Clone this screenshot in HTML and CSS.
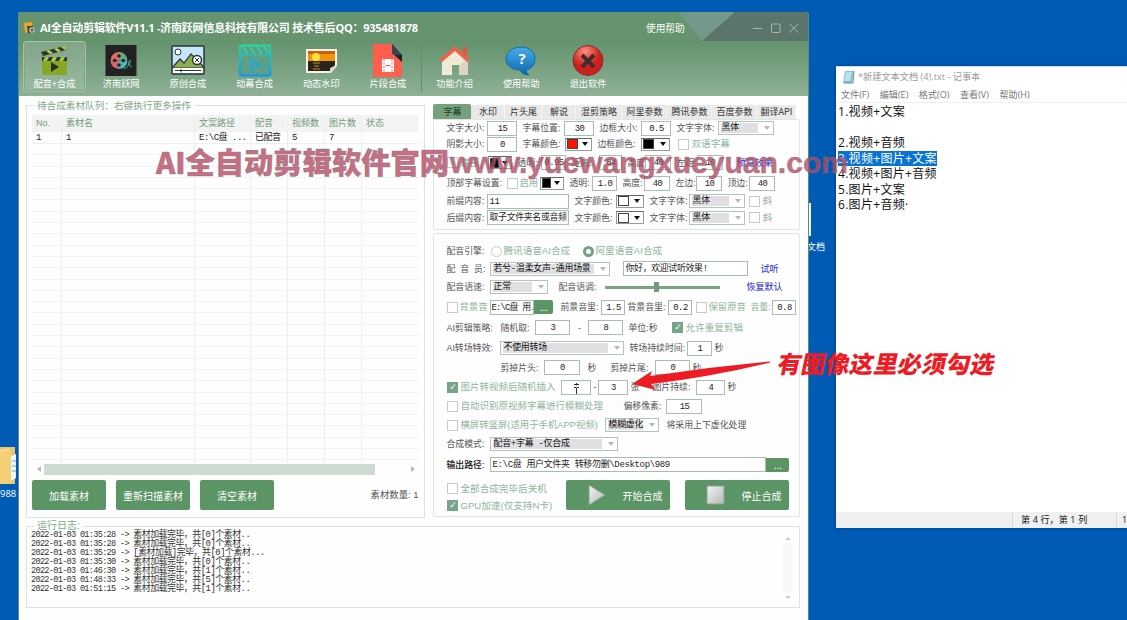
FILE: index.html
```html
<!DOCTYPE html>
<html lang="zh-CN">
<head>
<meta charset="utf-8">
<title>AI全自动剪辑软件</title>
<link rel="stylesheet" href="styles.css">
</head>
<body>
<div class="desktop">
  <div class="folder"><svg width="18" height="38" viewBox="0 0 18 38"><path d="M0 1H15V38H0Z" fill="#e9c568"/><path d="M0 4L9 2V37H0Z" fill="#f8dc90"/><path d="M11 10L16 8V32L11 35Z" fill="#eef5fa"/><path d="M12 15h4M12 20h4M12 25h4" stroke="#6aa9d8"/><path d="M0 6L11 4V38H0Z" fill="#f3cf75"/></svg><span>988</span></div>
  <div class="docfile"><i></i><span>文档</span></div>

  <main class="app">
    <header class="app-head">
      <svg class="corner" width="130" height="29" viewBox="0 0 130 29"><path d="M0 0H56L23 29Z" fill="#74998b"/><path d="M56 0H130V29H23Z" fill="#5b756d"/></svg>
      <div class="titlebar">
        <svg width="12" height="12" viewBox="0 0 12 12"><path d="M0 1L8 0V4H4V10L1 11Z" fill="#eba52d"/><path d="M3 4H9V11H4Z" fill="#493e28"/><circle cx="8" cy="8" r="3" fill="#a4aaa4"/><circle cx="8" cy="8" r="1" fill="#384238"/></svg>
        <h1>AI全自动剪辑软件V11.1 -济南跃网信息科技有限公司 技术售后QQ：935481878</h1>
        <span class="help">使用帮助</span>
        <svg class="winctl" width="48" height="12" viewBox="0 0 48 12" fill="none" stroke="#a7b6ae"><path d="M1 6.500H10M37.500 2L46 10.500M46 2L37.500 10.500"/><rect x="19.500" y="2" width="8.500" height="8.500" rx="1"/></svg>
      </div>
      <nav class="toolbar">
        <div class="tool on"><svg viewBox="0 0 34 34"><path d="M4 13H29V29Q29 31 27 31H6Q4 31 4 29Z" fill="#87a827"/><path d="M4 13H29V17H4Z" fill="#30382b"/><path d="M7 13l-2 4h4l2-4zm8 0-2 4h4l2-4zm8 0-2 4h4l2-4z" fill="#a6c94b"/><path d="M3 8L27 2L28 6L5 12Z" fill="#30382b"/><path d="M8 7l4 3 3-1-4-3zm8-2 4 3 3-1-4-3zm7-2 4 3 1-1-1-3z" fill="#b6d64c"/><path d="M13 18L21 23L13 28Z" fill="#26331d"/></svg><span>配音+合成</span></div>
        <div class="tool"><svg viewBox="0 0 34 34"><rect x="1.500" y="1" width="31" height="31" fill="#222223"/><path d="M15 8A8.500 8.500 0 0 1 23.500 16.500H15Z" fill="#62ad83"/><path d="M15 8A8.500 8.500 0 0 0 6.500 16.500H15Z" fill="#e36c62"/><path d="M6.500 16.500A8.500 8.500 0 0 0 15 25V16.500Z" fill="#d9636a"/><path d="M15 25A8.500 8.500 0 0 0 23.500 16.500H15Z" fill="#4fb6bc"/><g fill="#222223"><circle cx="15" cy="12" r="1.800"/><circle cx="10.800" cy="16.500" r="1.800"/><circle cx="19.200" cy="16.500" r="1.800"/><circle cx="15" cy="21" r="1.800"/></g><path d="M19 24Q24 25 24.500 20Q25.500 14 26.500 17Q24 22 28 23" fill="none" stroke="#45a995"/></svg><span>济南跃网</span></div>
        <div class="tool"><svg viewBox="0 0 34 34"><rect x="1" y="2" width="32" height="28" rx="1" fill="#c7e5fb" stroke="#28353b" stroke-width="1.500"/><path d="M2 23L9 15L13 19L20 10L25 15L32 22V24H2Z" fill="#8eae4e" stroke="#28353b" stroke-width="1.200"/><circle cx="7" cy="8" r="3" fill="#fff" stroke="#28353b"/><circle cx="26" cy="16" r="4.500" fill="#fff" stroke="#28353b" stroke-width="1.500"/><path d="M24 14l4 4M24 18l4-4" stroke="#28353b"/><path d="M2 24H32V29H2Z" fill="#fff"/><path d="M4 26.500H30M10 25V28.500" stroke="#28353b"/></svg><span>原创合成</span></div>
        <div class="tool"><svg viewBox="0 0 34 34"><defs><linearGradient id="clapGrad" x2="0" y2="1"><stop stop-color="#2ed09b"/><stop offset="1" stop-color="#159be4"/></linearGradient></defs><rect x="2" y="1.500" width="30" height="30" rx="2" fill="#5f9f86" stroke="url(#clapGrad)" stroke-width="2.500"/><path d="M2 11H32" stroke="#2dbeb4" stroke-width="1.500"/><path d="M5 3l5 7M12 3l5 7M19 3l5 7M26 3l4 6" stroke="#32d4a0" stroke-width="2"/><path d="M13.500 16L22 21L13.500 26Z" fill="#5f9f86" stroke="#22a7dc" stroke-width="2"/></svg><span>动幕合成</span></div>
        <div class="tool"><svg viewBox="0 0 34 34"><path d="M2 5H33V22L27 29H2Z" fill="#f5f2e6"/><path d="M4 7H31V18H4Z" fill="#f0960a"/><path d="M4 7H31V10H4Z" fill="#cf5f08"/><circle cx="12" cy="13" r="4" fill="#ffe03c"/><path d="M4 17H31V21L26 27H4Z" fill="#29231a"/><path d="M9 19h7M10 22h5M9 25h7" stroke="#c29318"/><path d="M33 21L26 29V24Z" fill="#d9d9d2"/></svg><span>动态水印</span></div>
        <div class="tool"><svg viewBox="0 0 34 34"><path d="M2 0H21L31 11V33H2Z" fill="#ff5d4e"/><path d="M21 0L31 11V18L21 9Z" fill="#17242a"/><path d="M21 0L31 11H24Q21 11 21 8Z" fill="#344650"/><rect x="11" y="15" width="12" height="13" fill="#fff"/><path d="M13 15V28M21 15V28" stroke="#ff5d4e" stroke-dasharray="2 1.500"/><path d="M14.500 21.500H19.500" stroke="#ff5d4e"/></svg><span>片段合成</span></div>
        <i class="sep"></i>
        <div class="tool"><svg viewBox="0 0 34 34"><path d="M25 3H29V13H25Z" fill="#e35340"/><path d="M4 15L17 4L30 15V31H21V21H14V31H4Z" fill="#efe9d7"/><path d="M21 21L30 15V31H21Z" fill="#ddd5c2"/><path d="M1 16L17 2L32 16L29 18L17 7L4 18Z" fill="#ee6049"/></svg><span>功能介绍</span></div>
        <div class="tool"><svg viewBox="0 0 34 34"><defs><linearGradient id="askGrad" x2="0" y2="1"><stop stop-color="#47abeb"/><stop offset="1" stop-color="#0d68ae"/></linearGradient></defs><path d="M17 3C26 3 31 8 31 15C31 21 27 25 22 26Q22 29 25 31Q18 31 16 26C7 26 2 21 2 15S8 3 17 3Z" fill="url(#askGrad)" stroke="#176da5"/><text x="18" y="20" text-anchor="middle" class="ask">?</text></svg><span>使用帮助</span></div>
        <div class="tool"><svg viewBox="0 0 34 34"><defs><radialGradient id="stopGrad" cx=".4" cy=".2"><stop stop-color="#ff8d80"/><stop offset="1" stop-color="#cc201e"/></radialGradient></defs><circle cx="17" cy="16.500" r="15" fill="url(#stopGrad)" stroke="#8f2925"/><path d="M11 11L23 23M23 11L11 23" stroke="#462b2b" stroke-width="4"/></svg><span>退出软件</span></div>
      </nav>
    </header>

    <div class="work">
      <section class="queue">
        <h2>待合成素材队列：右键执行更多操作</h2>
        <div class="table">
          <div class="tr th"><span>No.</span><span>素材名</span><span>文案路径</span><span>配音</span><span>视频数</span><span>图片数</span><span>状态</span></div>
          <div class="tr td"><span>1</span><span>1</span><span>E:\C盘 ...</span><span>已配音</span><span>5</span><span>7</span><span></span></div>
          <div class="tr fill"><span></span><span></span><span></span><span></span><span></span><span></span><span></span></div>
        </div>
        <div class="hscroll"><i class="al"></i><b></b><i class="ar"></i></div>
        <div class="actions"><button>加载素材</button><button>重新扫描素材</button><button>清空素材</button><span>素材数量: 1</span></div>
      </section>

      <section class="settings">
        <div class="tabs"><b>字幕</b><span>水印</span><span>片头尾</span><span>解说</span><span>混剪策略</span><span>阿里参数</span><span>腾讯参数</span><span>百度参数</span><span>翻译API</span></div>
        <div class="panel subtitle">
          <div class="row a1"><label>文字大小:</label><em>15</em><label>字幕位置:</label><em>30</em><label>边框大小:</label><em>0.5</em><label>文字字体:</label><div class="sel">黑体</div></div>
          <div class="row a2"><label>阴影大小:</label><em>0</em><label>字幕颜色:</label><div class="col red"></div><label>边框颜色:</label><div class="col black"></div><div class="cb pad">双语字幕</div></div>
          <div class="row a3"><div class="cb">底部</div><div class="col black"></div><label>透明:</label><em>0.95</em><label>距离:</label><em>84</em><label>高度:</label><em>40</em><label>左距:</label><em>10</em><a>预览效果</a></div>
          <div class="row a4"><label>顶部字幕设置:</label><div class="cb">启用</div><div class="col black"></div><label>透明:</label><em>1.0</em><label>高度:</label><em>40</em><label>左边:</label><em>10</em><label>顶边:</label><em>40</em></div>
          <div class="row a5"><label>前缀内容:</label><em class="l">11</em><label>文字颜色:</label><div class="col white"></div><label>文字字体:</label><div class="sel">黑体</div><div class="cb pads">斜</div></div>
          <div class="row a5"><label>后缀内容:</label><em class="l">取子文件夹名或音频</em><label>文字颜色:</label><div class="col white"></div><label>文字字体:</label><div class="sel">黑体</div><div class="cb pads">斜</div></div>
        </div>
        <div class="panel voice">
          <div class="row b1"><label>配音引擎:</label><div class="rd">腾讯语音AI合成</div><div class="rd on">阿里语音AI合成</div></div>
          <div class="row b2"><label>配&nbsp; 音&nbsp; 员:</label><div class="sel">若兮-温柔女声-通用场景</div><i></i><em class="l">你好，欢迎试听效果!</em><a>试听</a></div>
          <div class="row b3"><label>配音语速:</label><div class="sel">正常</div><label class="p10">配音语调:</label><div class="slider"><i></i></div><a>恢复默认</a></div>
          <div class="row b4"><div class="cb">背景音</div><em class="l">E:\C盘 用.</em><button class="dots">...</button><label class="p6">前景音里:</label><em>1.5</em><label class="p2">背景音里:</label><em>0.2</em><div class="cb pads">保留原音</div><label class="dim">音量:</label><em>0.8</em></div>
          <div class="row b5"><label>AI剪辑策略:</label><label>随机取:</label><em>3</em><label class="c">-</label><em>8</em><label>单位:秒</label><div class="cb pad ck">允许重复剪辑</div></div>
          <div class="row b6"><label>AI转场特效:</label><div class="sel">不使用转场</div><label>转场持续时间:</label><em>1</em><label class="p2">秒</label></div>
          <div class="row b7"><i></i><label>剪掉片头:</label><em>0</em><label class="p6">秒</label><label>剪掉片尾:</label><em>0</em><label class="p2">秒</label></div>
          <div class="row b8"><div class="cb ck">图片转视频后随机插入</div><em class="caret"><svg width="9" height="15" viewBox="0 0 9 15"><path d="M2 3.500H7M4.500 2V4.500M2 6.500H4L4.500 7L5 6.500H7M4.500 7V14M2.500 14.500H6.500" stroke="#333" fill="none"/></svg></em><label class="c">-</label><em>3</em><label class="p2">张</label><label>图片持续:</label><em>4</em><label class="p2">秒</label></div>
          <div class="row b9"><div class="cb">自动识别原视频字幕进行模糊处理</div><label>偏移像素:</label><em>15</em></div>
          <div class="row b10"><div class="cb">横屏转竖屏(适用于手机APP视频)</div><div class="sel">模糊虚化</div><label class="p6">将采用上下虚化处理</label></div>
          <div class="row b11"><label>合成模式:</label><div class="sel">配音+字幕 -仅合成</div></div>
          <div class="row b12"><label class="strong">输出路径:</label><em class="l">E:\C盘 用户文件夹 转移勿删\Desktop\989</em><button class="dots">...</button></div>
          <div class="final"><div class="opts"><div class="cb">全部合成完毕后关机</div><div class="cb ck">GPU加速(仅支持N卡)</div></div>
            <button><svg width="20" height="22" viewBox="0 0 20 22"><defs><linearGradient id="metal" x2="1" y2="1"><stop stop-color="#f3f3f3"/><stop offset="1" stop-color="#b4b9b5"/></linearGradient></defs><path d="M2 1L18 11L2 21Z" fill="url(#metal)" stroke="#8d9d91"/></svg>开始合成</button>
            <button><svg width="20" height="22" viewBox="0 0 20 22"><rect x="1" y="2" width="17" height="18" fill="url(#metal)" stroke="#8d9d91"/></svg>停止合成</button></div>
        </div>
      </section>
    </div>

    <section class="log">
      <h2>运行日志:</h2>
      <p>2022-01-03 01:35:28 -&gt; <q>素材加载完毕，共[0]个素材..</q></p>
      <p>2022-01-03 01:35:28 -&gt; <q>素材加载完毕，共[0]个素材..</q></p>
      <p>2022-01-03 01:35:29 -&gt; <q>[素材加载]完毕，共[0]个素材...</q></p>
      <p>2022-01-03 01:35:30 -&gt; <q>素材加载完毕，共[0]个素材..</q></p>
      <p>2022-01-03 01:46:30 -&gt; <q>素材加载完毕，共[1]个素材..</q></p>
      <p>2022-01-03 01:48:33 -&gt; <q>素材加载完毕，共[5]个素材..</q></p>
      <p>2022-01-03 01:51:15 -&gt; <q>素材加载完毕，共[1]个素材..</q></p>
      <svg class="vscroll" width="12" height="66" viewBox="0 0 12 66"><path d="M3 5L6 2L9 5ZM3 61L6 64L9 61Z" fill="#c9ccc9"/><rect x="1" y="8" width="10" height="49" fill="#f8f8f8"/></svg>
    </section>
  </main>

  <section class="notepad">
    <div class="np-title"><svg width="13" height="14" viewBox="0 0 13 14"><path d="M3 1H12L10 13H1Z" fill="#83c0d0"/><path d="M4 2H10L8 11H2Z" fill="#b8e3e9"/><path d="M12 1L11 13H2" stroke="#779096" fill="none"/></svg><span>*新建文本文档 (4).txt - 记事本</span></div>
    <div class="np-menu"><span>文件(F)</span><span>编辑(E)</span><span>格式(O)</span><span>查看(V)</span><span>帮助(H)</span></div>
    <div class="np-body"><p>1.视频+文案</p><p>&nbsp;</p><p>2.视频+音频</p><p><mark>3.视频+图片+文案</mark></p><p>4.视频+图片+音频</p><p>5.图片+文案</p><p>6.图片+音频·</p></div>
    <div class="np-status"><span>第 4 行，第 1 列</span><span>1</span></div>
  </section>

  <svg class="overlay" width="1127" height="620" viewBox="0 0 1127 620">
    <g class="mark"><text x="156" y="174" textLength="293" lengthAdjust="spacingAndGlyphs">AI全自动剪辑软件官网</text><text x="450" y="173" class="url" textLength="398" lengthAdjust="spacingAndGlyphs">www.yuewangxueyuan.com</text></g>
    <path d="M770 361.500Q710 367 650 376L652 371L632 384L656 390L651 384Q710 377 770 362.500Z" fill="#ed1c24"/>
    <text class="note" transform="translate(776 373) skewX(-12)" textLength="217" lengthAdjust="spacingAndGlyphs">有图像这里必须勾选</text>
  </svg>
</div>
</body>
</html>
```

FILE: styles.css
```css
*, *::before, *::after { box-sizing: border-box; }
body { margin: 0; overflow: hidden; font-family: "Liberation Sans", "Noto Sans CJK SC", sans-serif; font-size: 9px; line-height: 1; color: #555; }
h1, h2, p { margin: 0; font-weight: normal; }
em, i { font-style: normal; }
button { border: 0; padding: 0; margin: 0; font: 10px "Noto Sans CJK SC", sans-serif; color: #fff; background: #5b9465; border-radius: 2px; white-space: nowrap; }
.desktop { position: relative; width: 1127px; height: 620px; background: #005bb5; overflow: hidden; }

/* desktop items and windows */
.folder { position: absolute; left: 0; top: 446px; color: #fff; }
.folder svg { display: block; }
.folder span { display: block; font: 9.500px/18px "Open Sans", sans-serif; margin-top: 1px; }
.docfile { position: absolute; left: 807px; top: 203px; color: #fff; }
.docfile i { display: block; width: 4px; height: 33px; background: #eef3f8; }
.docfile span { display: block; margin-top: 7px; white-space: nowrap; }
.app { position: absolute; left: 18px; top: 12px; width: 791px; height: 608px; background: #fefefe; border: solid #5d8f70; border-width: 0 1px; border-radius: 3px 3px 0 0; overflow: hidden; }

.app-head { position: relative; height: 84px; background: linear-gradient(#65946f 0, #65946f 38%, #8fb196 100%); margin: 0 -1px; }
.corner { position: absolute; right: 0; top: 0; }
.titlebar { position: relative; height: 29px; display: flex; align-items: center; padding: 2px 9px 0 6px; color: #fff; }
.titlebar h1 { width: 379px; margin-left: 4px; font: bold 11px/14px "Open Sans", "Noto Sans CJK SC", sans-serif; white-space: nowrap; letter-spacing: -.22px; }
.help { margin-left: 227px; font: 9.700px/14px "Noto Sans CJK SC", sans-serif; }
.winctl { margin-left: auto; }
.toolbar { display: flex; padding: 0 5px; height: 51px; }
.tool { width: 63px; margin-right: 3.700px; border: 1px solid transparent; border-radius: 3px; display: flex; flex-direction: column; align-items: center; padding-top: 2px; color: #fff; }
.tool.on { border-color: #a6c3aa; background: linear-gradient(#80a588, #9ab9a0); box-shadow: inset 0 0 0 1px #81a588; }
.tool svg { width: 34px; height: 34px; flex: none; }
.tool span { font: 9.200px/11px "Noto Sans CJK SC", sans-serif; white-space: nowrap; }
.ask { font: bold 15px "Open Sans", sans-serif; fill: #fff; }
.sep { width: 1px; height: 48px; margin: 3px 1px 0 -2px; background: #688b70; }

.work { display: flex; padding: 9px 8px 0 7px; height: 422px; gap: 7px; }
.queue { width: 400px; height: 413px; border: 1px solid #dce3dd; padding: 0 6px 0 5px; }
h2 { width: max-content; margin: -6px 0 0 2px; padding: 0 3px; font: 10px/12px "Liberation Sans", "Noto Sans CJK SC", sans-serif; color: #80a888; background: #fefefe; }
.queue h2 { font-size: 9.650px; }
.table { margin-top: 3px; height: 348px; display: flex; flex-direction: column; }
.tr { display: grid; grid-template-columns: 30px 133px 56px 37px 37px 37px 1fr; }
.tr span { padding-left: 4px; white-space: nowrap; border-right: 1px solid #eeefee; }
.tr span:last-child { border: 0; }
.th { height: 17px; background: #f3f3f3; line-height: 17px; color: #729b7a; }
.td { height: 12px; line-height: 13px; color: #222; border-bottom: 1px solid #eef0ee; }
.td span { font-family: "Liberation Mono", "Noto Sans CJK SC", monospace; letter-spacing: -.5px; }
.fill { flex: 1; background: repeating-linear-gradient(transparent 0, transparent 10.300px, #f1f2f1 10.300px, #f1f2f1 11.300px); }
.hscroll { height: 12px; display: flex; align-items: center; padding: 0 3px 0 5px; }
.hscroll b { width: 331px; height: 11px; background: #cddbd0; margin-left: 3px; }
.al, .ar { border: 3px solid transparent; border-left: 0; border-right: 4px solid #b6bab6; width: 4px; }
.ar { border-right: 0; border-left: 4px solid #b6bab6; margin-left: auto; }
.actions { display: flex; margin-top: 5px; gap: 10px; }
.actions button { width: 74px; height: 30px; }
.actions span { margin-left: auto; line-height: 30px; font-size: 9.400px; }

.settings { width: 367px; margin-left: 1px; }
.tabs { display: flex; height: 15px; margin-top: -1px; align-items: stretch; font: 9px/15px "Noto Sans CJK SC", sans-serif; color: #333; }
.tabs b { width: 38px; background: #76a17c; border-radius: 2px 2px 0 0; text-align: center; font-weight: normal; color: #173d1c; }
.tabs span { background: #e9e9e9; text-align: center; width: 45px; margin-top: 1px; white-space: nowrap; border-right: 1px solid #f5f5f5; line-height: 14px; }
.tabs span:nth-child(2) { width: 34px; }
.tabs span:nth-child(3) { width: 37px; }
.tabs span:nth-child(4) { width: 34px; }
.tabs span:nth-child(5) { width: 46px; }
.tabs span:last-child { width: 39px; }
.panel { border: 1px solid #e0e5e1; border-radius: 2px; padding-left: 7px; }
.subtitle { height: 111px; display: grid; grid-template-rows: 16px 16px 21px 20px 16px 17px; }
.voice { height: 284px; margin-top: 3px; padding-top: 8px; display: grid; grid-template-rows: 18px 17px 20px 20px 21px 20px 19px 20px 18px 20px 17px 25px 34px; }
.row { display: grid; align-items: center; white-space: nowrap; }
label { padding-left: 5px; font: 8.900px/14px "Liberation Sans", "Noto Sans CJK SC", sans-serif; color: #555; }
label.c { padding: 0; text-align: center; }
label.dim { color: #8fb59d; padding-left: 4px; }
label.strong { color: #111; font-weight: 500; }
label.p2 { padding-left: 2px; }
label.p6 { padding-left: 7px; }
label.p10 { padding-left: 10px; }
em { height: 15px; border: 1px solid #a5c1ad; background: #fff; color: #222; text-align: center; font: 8.900px/14px "Liberation Mono", "Noto Sans CJK SC", monospace; letter-spacing: -.5px; overflow: hidden; }
em.l { text-align: left; padding-left: 1px; letter-spacing: -.3px; }
.b4 em.l { letter-spacing: -.8px; padding-left: 0; }
.b12 em.l { letter-spacing: -.35px; font-size: 9px; }
.caret svg { display: block; margin: 0 auto; }
.sel { height: 14px; border: 1px solid #b1c6b6; display: flex; align-items: center; background: linear-gradient(#e0e0e2, #e0e0e2) 2px 1px / calc(100% - 17px) 10px no-repeat #fff; padding: 0 3px 0 2px; color: #111; font: 8.900px/12px "Liberation Mono", "Noto Sans CJK SC", monospace; letter-spacing: -.2px; }
.sel::after { content: ""; margin-left: auto; border: 3.500px solid transparent; border-top: 4px solid #b4bab5; border-bottom: 0; }
.col { height: 13px; border: 1px solid #969d98; border-top-color: #666; display: flex; align-items: center; padding: 1px 3px 1px 1px; background: #fff; }
.col::before { content: ""; width: 11px; height: 10px; border: 1px solid #444; }
.col::after { content: ""; margin-left: auto; border: 3px solid transparent; border-top: 4px solid #111; border-bottom: 0; }
.a3 .col::before, .a4 .col::before { width: 9px; }
.red::before { background: #f10; }
.black::before { background: #000; }
.cb, .rd { display: flex; align-items: center; gap: 2px; padding-left: 6px; font: 9.600px/14px "Liberation Sans", "Noto Sans CJK SC", sans-serif; color: #8fb59d; }
.cb::before { content: ""; width: 11px; height: 11px; flex: none; border: 1px solid #c3cdc6; background: #fff; }
.cb.ck::before { content: "✓"; font: bold 9px/9px "DejaVu Sans", sans-serif; text-align: center; background: #76a58a; border-color: #76a58a; color: #fff; }
.cb.pad { padding-left: 8px; }
.cb.pads { padding-left: 4px; }
.b4 .cb, .a4 .cb { gap: 1px; font-size: 9.400px; }
.rd { padding-left: 1px; gap: 1px; }
.rd::before { content: ""; width: 11px; height: 11px; flex: none; border: 1px solid #bfc9c2; border-radius: 50%; }
.rd.on::before { border: 3px solid #72a084; }
a { color: #1818dc; font: 9px/14px "Noto Sans CJK SC", sans-serif; }
.dots { height: 14px; line-height: 10px; border-radius: 0 2px 2px 0; }
.slider { height: 3px; background: #7ba484; display: flex; justify-content: center; align-items: center; padding-right: 12px; }
.slider i { width: 5px; height: 10px; background: #72997a; flex: none; }

/* form row columns */
.a1 { grid-template-columns: 46px 30px 47px 30px 47px 30px 47px 56px; }
.a2 { grid-template-columns: 46px 30px 48px 27px 49px 29px 1fr; }
.a3 { grid-template-columns: 47px 24px 29px 25px 33px 23px 23px 26px 26px 26px 1fr; }
.a3 a { padding-left: 13px; }
.a4 { grid-template-columns: 60px 39px 24px 28px 25px 27px 26px 26px 26px 27px 26px; }
.a5 { grid-template-columns: 46px 82px 47px 28px 45px 56px 1fr; }
.b1 { grid-template-columns: 49px 92px 1fr; }
.b2 { grid-template-columns: 49px 120px 13px 125px 1fr; }
.b2 a { padding-left: 12px; }
.b3 { grid-template-columns: 49px 58px 57px 115px 1fr; }
.b3 a { padding-left: 26px; }
.b4 { grid-template-columns: 49px 44px 19px 48px 24px 43px 24px 54px 26px 24px; }
.b5 { grid-template-columns: 54px 40px 35px 18px 35px 41px 1fr; }
.b6 { grid-template-columns: 59px 124px 63px 25px 1fr; }
.b7 { grid-template-columns: 54px 49px 36px 25px 50px 35px 1fr; }
.b8 { grid-template-columns: 120px 30px 7px 30px 19px 49px 29px 1fr; }
.b9 { grid-template-columns: 177px 48px 36px; }
.b10 { grid-template-columns: 164px 54px 1fr; }
.b11 { grid-template-columns: 49px 128px; }
.b12 { grid-template-columns: 49px 276px 23px; }
.b8 .cb, .b9 .cb { font-size: 9.500px; }
.b10 .cb { font-size: 9.400px; }
.final { display: grid; grid-template-columns: 125px 104px 104px; padding-top: 3px; }
.final button { display: flex; align-items: center; justify-content: flex-end; height: 30px; padding-right: 8px; }
.final button svg { margin-right: 15px; }
.final button:last-child { width: 104px; margin-left: 15px; }
.opts { display: grid; grid-template-rows: 17px 17px; }

.log { position: relative; margin: 8px 8px 0 7px; height: 82px; border: 1px solid #dde3de; padding: 0 0 0 4px; color: #333; }
.log h2 { margin: -7px 0 -1px 3px; }
.log p { height: 9px; font: 8.600px/9px "Liberation Mono", monospace; letter-spacing: -.710px; white-space: pre; }
.log q { quotes: none; font: 8.900px/9px "Liberation Mono", "Noto Sans CJK SC", monospace; letter-spacing: -.45px; }
.vscroll { position: absolute; right: 5px; top: 8px; }

.notepad { position: absolute; left: 836px; top: 66px; width: 300px; height: 462px; background: #fff; border-top: 1px solid #c9dff2; box-shadow: 0 0 4px #003f80; color: #111; display: flex; flex-direction: column; }
.np-title { display: flex; align-items: center; height: 19px; padding-left: 6px; gap: 3px; font: 9.200px/16px "Open Sans", "Noto Sans CJK SC", sans-serif; color: #999; }
.np-menu { display: flex; gap: 10.500px; height: 17px; padding-left: 5px; font: 9.100px/18px "Open Sans", "Noto Sans CJK SC", sans-serif; color: #777; border-bottom: 1px solid #eee; white-space: nowrap; }
.np-body { flex: 1; padding: 1px 0 0 2px; font: 12px/15.500px "Open Sans", "Noto Sans CJK SC", sans-serif; letter-spacing: .3px; }
.np-body p { height: 15.500px; white-space: nowrap; }
.np-body mark { display: inline-block; height: 15px; line-height: 15px; background: #0873d5; color: #fff; }
.np-status { height: 16px; background: #f0f0f0; display: flex; font: 9px/16px "Open Sans", "Noto Sans CJK SC", sans-serif; padding-left: 176px; }
.np-status span { flex: none; width: 104px; padding-left: 8px; border-left: 1px solid #d8d8d8; white-space: nowrap; letter-spacing: .15px; }
.np-status span + span { padding-left: 5px; }

.overlay { position: absolute; left: 0; top: 0; }
.mark { font: 900 29px "Noto Sans CJK SC", sans-serif; fill: #b94864; fill-opacity: .8; stroke: #777; stroke-width: .6px; stroke-opacity: .7; }
.url { font: bold 29px "Liberation Sans", sans-serif; }
.note { font: 900 24px "Noto Sans CJK SC", sans-serif; fill: #ed1c24; }
```
